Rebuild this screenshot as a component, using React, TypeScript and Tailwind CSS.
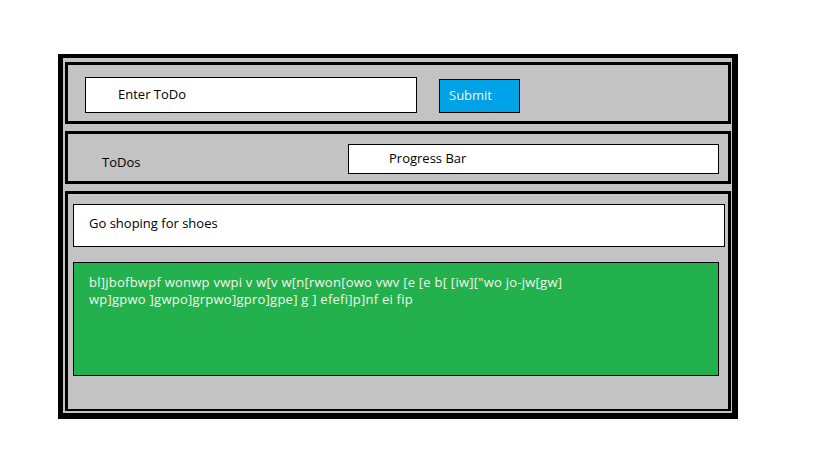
export default function App() {
  return (
    <div className="min-h-[460px] w-[819px] bg-white pl-[58px] pt-[54px] font-['Open_Sans',sans-serif] text-[13px] text-black">
      <div className="flex h-[365px] w-[680px] flex-col gap-[7px] border-b-[6px] border-l-[5px] border-r-[6px] border-t-4 border-black bg-[#c3c3c3] pb-[2px] pl-[2px] pr-[1px] pt-[4px]">
        {/* input row */}
        <section className="flex h-[62px] shrink-0 items-start border-[3px] border-black pl-[17px]">
          <div className="mt-[12px] flex h-[36px] w-[332px] items-center border border-black bg-white pl-[32px]">
            Enter ToDo
          </div>
          <button className="ml-[22px] mt-[14px] flex h-[34px] w-[81px] items-center border border-black bg-[#00a2e8] pl-[9px] text-[#f7f1e4]">
            Submit
          </button>
        </section>

        {/* header row */}
        <section className="flex h-[53px] shrink-0 items-start border-[3px] border-black">
          <span className="ml-[34px] mt-[19px]">ToDos</span>
          <div className="ml-auto mr-[9px] mt-[10px] flex h-[30px] w-[371px] items-center border border-black bg-white pl-[40px]">
            Progress Bar
          </div>
        </section>

        {/* todo list */}
        <section className="flex h-[220px] shrink-0 flex-col border-[3px] border-b-2 border-black pl-[5px] pt-[10px]">
          <div className="flex h-[43px] w-[652px] items-center border border-black bg-white pb-[3px] pl-[15px]">
            Go shoping for shoes
          </div>
          <div className="mt-[15px] h-[114px] w-[646px] border border-black bg-[#22b14c] pl-[15px] pt-[11px] leading-[17px] tracking-[0.25px] text-[#f4f4ee]">
            <p>bl]jbofbwpf wonwp vwpi v w[v w[n[rwon[owo vwv [e [e b[ [iw]["wo jo-jw[gw]</p>
            <p>wp]gpwo ]gwpo]grpwo]gpro]gpe] g ] efefi]p]nf ei fip</p>
          </div>
        </section>
      </div>
    </div>
  );
}
